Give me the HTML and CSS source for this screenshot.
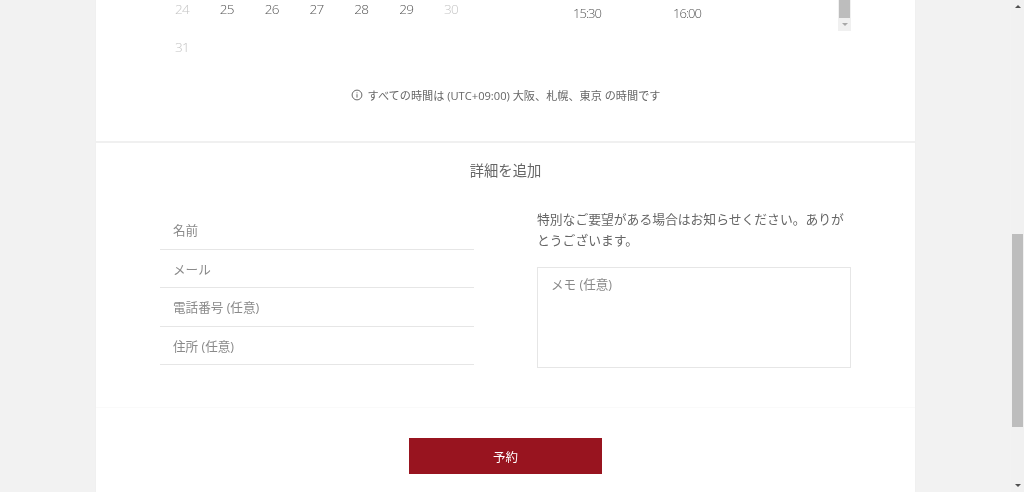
FILE: index.html
```html
<!DOCTYPE html>
<html lang="ja">
<head>
<meta charset="utf-8">
<title>予約</title>
<link rel="stylesheet" href="styles.css">
</head>
<body>
<div class="page">
  <main class="main">
    <div class="card">
      <section class="schedule">
        <div class="columns">
          <div class="calendar">
            <span class="day off">24</span><span class="day">25</span><span class="day">26</span><span class="day">27</span><span class="day">28</span><span class="day">29</span><span class="day off">30</span>
            <span class="day off">31</span>
          </div>
          <div class="times">
            <div class="slots"><span class="slot">15:30</span><span class="slot">16:00</span></div>
            <div class="mini-bar">
              <div class="mini-thumb"></div>
              <div class="mini-arrow"></div>
            </div>
          </div>
        </div>
        <p class="note">
          <svg class="info" width="12" height="12" viewBox="0 0 12 12" aria-hidden="true"><circle cx="6" cy="6" r="4.9" fill="none" stroke="#666" stroke-width="1"/><path d="M6 5.2V8.6M6 3.4V4.3" stroke="#666" stroke-width="1" fill="none"/></svg>
          <span>すべての時間は (UTC+09:00) 大阪、札幌、東京 の時間です</span>
        </p>
      </section>
      <section class="details">
        <h2 class="title">詳細を追加</h2>
        <div class="form">
          <div class="fields">
            <input class="field" type="text" placeholder="名前">
            <input class="field" type="text" placeholder="メール">
            <input class="field" type="text" placeholder="電話番号 (任意)">
            <input class="field" type="text" placeholder="住所 (任意)">
          </div>
          <div class="memo">
            <p class="memo-text">特別なご要望がある場合はお知らせください。ありがとうございます。</p>
            <textarea class="memo-box" placeholder="メモ (任意)"></textarea>
          </div>
        </div>
      </section>
      <section class="actions">
        <button class="submit" type="button">予約</button>
      </section>
    </div>
  </main>
  <aside class="scrollbar">
    <div class="arrow up"></div>
    <div class="track"><div class="thumb"></div></div>
    <div class="arrow down"></div>
  </aside>
</div>
</body>
</html>
```
FILE: styles.css
```css
* { box-sizing: border-box; }
html, body { margin: 0; height: 100%; overflow: hidden; }
body {
  background: #f2f2f2;
  color: #666;
  font-family: "Open Sans", "Noto Sans CJK JP", sans-serif;
}
.page { display: flex; height: 492px; overflow: hidden; filter: blur(0.35px); }
.main { flex: 1; min-width: 0; overflow: hidden; }
.card {
  width: 819px;
  margin: 0 auto;
  background: #fff;
  box-shadow: 0 0 1px #e8e8e8;
}
.schedule { padding: 0 64px 37px; }
.columns {
  display: grid;
  grid-template-columns: 314px 314px;
  column-gap: 63px;
  margin-top: -10px;
  margin-bottom: 19px;
  height: 76px;
}
.calendar {
  display: grid;
  grid-template-columns: repeat(7, 1fr);
  grid-auto-rows: 38px;
  align-items: center;
  justify-items: center;
  align-content: start;
}
.day {
  margin-right: 1px;
  font-size: 13.5px;
  font-weight: 300;
  letter-spacing: -0.7px;
  color: #555;
}
.day.off { color: #c4c4c4; }
.times { display: flex; height: 41px; }
.slots { flex: 1; display: flex; padding-top: 5px; height: 41px; }
.slot {
  width: 100px;
  height: 36px;
  line-height: 36px;
  text-align: center;
  font-size: 13px;
  font-weight: 300;
  letter-spacing: -1px;
  color: #555;
}
.mini-bar {
  width: 13px;
  height: 41px;
  background: #f0f0f0;
  display: flex;
  flex-direction: column;
  align-items: center;
}
.mini-thumb { width: 11px; height: 28px; background: #bdbdbd; }
.mini-arrow {
  margin-top: 5px;
  width: 0;
  height: 0;
  border-left: 3px solid transparent;
  border-right: 3px solid transparent;
  border-top: 3px solid #a8a8a8;
}
.note {
  margin: 0;
  height: 19px;
  display: flex;
  align-items: center;
  justify-content: center;
  gap: 5px;
  font-size: 11.15px;
  color: #666;
}
.info { flex: none; }
.details { border-top: 2px solid #f0f0f0; padding: 18px 64px 39px; }
.title {
  margin: 0 0 28px;
  font-size: 14.3px;
  font-weight: 400;
  line-height: 20px;
  text-align: center;
  color: #666;
}
.form {
  display: grid;
  grid-template-columns: 314px 314px;
  column-gap: 63px;
}
.fields { padding-top: 2px; display: flex; flex-direction: column; }
.field {
  display: block;
  width: 100%;
  height: 38.5px;
  padding: 2px 13px 0;
  border: 0;
  border-bottom: 1px solid #e6e6e6;
  background: transparent;
  font: 12.6px "Open Sans", "Noto Sans CJK JP", sans-serif;
  outline: none;
}
.field::placeholder, .memo-box::placeholder { color: #8a8a8a; opacity: 1; }
.memo-text {
  margin: 0 0 16px;
  font-size: 12.8px;
  line-height: 21px;
  color: #666;
}
.memo-box {
  display: block;
  width: 100%;
  height: 101px;
  padding: 8px 13px;
  border: 1px solid #e6e6e6;
  background: #fff;
  font: 12.6px/17px "Open Sans", "Noto Sans CJK JP", sans-serif;
  resize: none;
  outline: none;
}
.actions { border-top: 1px solid #fafafa; padding: 30px 0 40px; text-align: center; }
.submit {
  display: block;
  width: 193px;
  height: 36px;
  margin: 0 auto;
  padding: 0;
  border: 0;
  background: #98141f;
  color: #fff;
  font: 12.5px "Noto Sans CJK JP", sans-serif;
}
.scrollbar {
  flex: none;
  width: 13px;
  background: #f1f1f1;
  display: flex;
  flex-direction: column;
  align-items: center;
}
.arrow { flex: none; width: 0; height: 0; border-left: 3px solid transparent; border-right: 3px solid transparent; }
.arrow.up { margin: 5px 0 4px; border-bottom: 3px solid #505050; }
.arrow.down { margin: 4px 0 5px; border-top: 3px solid #505050; }
.track { flex: 1; width: 11px; padding-top: 222px; }
.thumb { height: 193px; background: #bdbdbd; }
```
